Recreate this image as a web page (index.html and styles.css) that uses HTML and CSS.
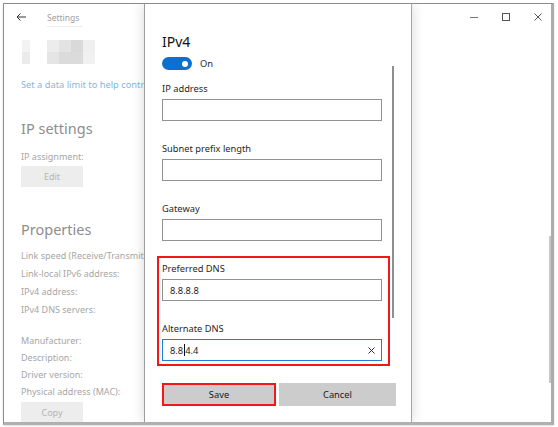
FILE: index.html
```html
<!DOCTYPE html>
<html lang="en">
<head>
<meta charset="utf-8">
<title>Settings - IPv4</title>
<link rel="stylesheet" href="styles.css">
</head>
<body>
<div class="window">
  <div class="titlebar">
    <span class="back"><svg width="10" height="8" viewBox="0 0 10 8"><path d="M4.5 0.5 L1 4 L4.5 7.5 M1 4 H10" fill="none" stroke="#333" stroke-width="1"/></svg></span>
    <span class="apptitle">Settings</span>
    <div class="caption">
      <span class="cap-btn"><svg width="8" height="8" viewBox="0 0 8 8"><path d="M0 4.5 H8" stroke="#777" stroke-width="1"/></svg></span>
      <span class="cap-btn"><svg width="8" height="8" viewBox="0 0 8 8"><rect x="0.5" y="0.5" width="7" height="7" fill="none" stroke="#555" stroke-width="1"/></svg></span>
      <span class="cap-btn"><svg width="8" height="8" viewBox="0 0 8 8"><path d="M0.5 0.5 L7.5 7.5 M7.5 0.5 L0.5 7.5" stroke="#555" stroke-width="1"/></svg></span>
    </div>
  </div>

  <div class="page">
    <div class="mosaic">
      <div class="mcol a"><i class="c1"></i><i class="c2"></i></div>
      <div class="mblock">
        <div class="mcol"><i class="c3"></i><i class="c4"></i></div>
        <div class="mcol"><i class="c5"></i><i class="c6"></i></div>
        <div class="mcol"><i class="c7"></i><i class="c6"></i></div>
        <div class="mcol"><i class="c8"></i><i class="c9"></i></div>
      </div>
    </div>
    <div class="link">Set a data limit to help control</div>
    <div class="heading first">IP settings</div>
    <div class="prop single">IP assignment:</div>
    <div class="fbtn edit">Edit</div>
    <div class="heading second">Properties</div>
    <div class="props one">
      <div>Link speed (Receive/Transmit):</div>
      <div>Link-local IPv6 address:</div>
      <div>IPv4 address:</div>
      <div>IPv4 DNS servers:</div>
    </div>
    <div class="props two">
      <div>Manufacturer:</div>
      <div>Description:</div>
      <div>Driver version:</div>
      <div>Physical address (MAC):</div>
    </div>
    <div class="fbtn copy">Copy</div>
  </div>

  <div class="main-scroll"></div>

  <div class="dialog">
    <div class="dtitle">IPv4</div>
    <div class="toggle-row">
      <span class="toggle"><span class="knob"></span></span>
      <span class="toggle-label">On</span>
    </div>
    <div class="fields">
      <div class="field">
        <div class="flabel">IP address</div>
        <div class="input"></div>
      </div>
      <div class="field">
        <div class="flabel">Subnet prefix length</div>
        <div class="input"></div>
      </div>
      <div class="field">
        <div class="flabel">Gateway</div>
        <div class="input"></div>
      </div>
      <div class="highlight">
        <div class="field">
          <div class="flabel">Preferred DNS</div>
          <div class="input"><span class="val">8.8.8.8</span></div>
        </div>
        <div class="field">
          <div class="flabel">Alternate DNS</div>
          <div class="input focus"><span class="val">8.8<span class="caret"></span>4.4</span>
            <span class="clear"><svg width="7" height="7" viewBox="0 0 7 7"><path d="M0.5 0.5 L6.5 6.5 M6.5 0.5 L0.5 6.5" stroke="#333" stroke-width="1"/></svg></span>
          </div>
        </div>
      </div>
    </div>
    <div class="buttons">
      <div class="dbtn save">Save</div>
      <div class="dbtn cancel">Cancel</div>
    </div>
    <div class="dscroll"></div>
  </div>
</div>
</body>
</html>
```
FILE: styles.css
```css
* { box-sizing: border-box; }
html, body { margin: 0; padding: 0; }
body {
  width: 558px;
  height: 427px;
  overflow: hidden;
  background: #ffffff;
  font-family: "Noto Sans", "Open Sans", "DejaVu Sans", sans-serif;
}
.window {
  position: relative;
  margin: 3px 0 0 3px;
  width: 551px;
  height: 422px;
  background: #ffffff;
  border-top: 1px solid #8c8c8c;
  border-left: 1px solid #8c8c8c;
  border-right: 3px solid #ababab;
  border-bottom: 3px solid #b0b0b0;
  overflow: hidden;
  box-shadow: 0 1px 2px rgba(0,0,0,0.12);
}

/* title bar */
.titlebar {
  height: 26px;
  display: flex;
  align-items: center;
}
.back { margin-left: 12px; width: 10px; height: 8px; display: flex; }
.apptitle {
  margin-left: 21px;
  width: 36px;
  font-size: 8.5px;
  line-height: 12px;
  color: #a0a0a0;
  padding-top: 1px;
  border-bottom: 1px solid #ececec;
  position: relative;
  top: 2px;
  padding-bottom: 2px;
}
.caption { margin-left: auto; margin-right: -3px; display: flex; }
.cap-btn {
  width: 32px;
  height: 26px;
  display: flex;
  align-items: center;
  justify-content: center;
}

/* faded settings page */
.page {
  width: 140px;
  overflow: hidden;
  padding-left: 17px;
  color: #a6a6a6;
  font-size: 9px;
}
.mosaic { margin-top: 10px; margin-left: 1px; display: flex; }
.mcol { display: flex; flex-direction: column; width: 12px; }
.mcol.a { width: 8px; margin-right: 17px; }
.mcol i { display: block; height: 12px; }
.mblock { display: flex; }
.c1 { background: #f3f3f3; }
.c2 { background: #ebebeb; }
.c3 { background: #ececec; }
.c4 { background: #e5e5e5; }
.c5 { background: #e3e3e3; }
.c6 { background: #dbdbdb; }
.c7 { background: #d9d9d9; }
.c8 { background: #efefef; }
.c9 { background: #f1f1f1; }
.link {
  margin-top: 14px;
  line-height: 13px;
  font-size: 9.3px;
  color: #86b6df;
  white-space: nowrap;
  overflow: hidden;
}
.heading {
  font-size: 14.5px;
  line-height: 18px;
  color: #8e8e8e;
}
.heading.first { margin-top: 28px; }
.heading.second { margin-top: 33px; }
.prop.single { margin-top: 13px; line-height: 13px; }
.fbtn {
  width: 62px;
  height: 21px;
  background: #ededed;
  color: #b4b4b4;
  text-align: center;
  line-height: 21px;
}
.fbtn.edit { margin-top: 3px; }
.fbtn.copy { margin-top: 2px; }
.props { white-space: nowrap; overflow: hidden; }
.props.one { margin-top: 9px; line-height: 18px; }
.props.two { margin-top: 13px; line-height: 17px; }

.main-scroll {
  position: absolute;
  right: 0;
  top: 232px;
  width: 2px;
  height: 147px;
  background: #c6c6c6;
}

/* dialog */
.dialog {
  position: absolute;
  left: 140px;
  top: 0;
  bottom: 0;
  width: 268px;
  background: #ffffff;
  border-left: 1px solid #9c9c9c;
  border-right: 1px solid #a8a8a8;
  box-shadow: 0 0 12px rgba(0,0,0,0.16);
  padding: 29px 15px 0 17px;
  color: #1f1f1f;
  font-size: 9.3px;
}
.dtitle { font-size: 14px; line-height: 18px; color: #111; }
.toggle-row {
  margin-top: 6px;
  height: 13px;
  display: flex;
  align-items: center;
}
.toggle {
  width: 30px;
  height: 13px;
  border-radius: 7px;
  background: #0f6fcf;
  display: flex;
  align-items: center;
  justify-content: flex-end;
  padding-right: 4px;
}
.knob { width: 6px; height: 6px; border-radius: 50%; background: #ffffff; }
.toggle-label { margin-left: 8px; line-height: 13px; }
.fields { width: 220px; margin-top: 12px; }
.field + .field { margin-top: 21px; }
.flabel { line-height: 13px; }
.input {
  margin-top: 4px;
  height: 22px;
  border: 1px solid #929292;
  background: #ffffff;
  display: flex;
  align-items: center;
  padding-left: 7px;
  padding-right: 6px;
}
.input.focus { border-color: #1e7fd8; }
.val { display: flex; align-items: center; line-height: 13px; color: #222; }
.caret { display: inline-block; width: 1px; height: 12px; background: #111; margin: 0 0.5px; }
.clear { margin-left: auto; display: flex; }
.highlight {
  margin: 15px -8px 0 -5px;
  border: 2px solid #f21818;
  padding: 4px 6px 3px 3px;
}
.buttons { margin-top: 17px; display: flex; gap: 3px; }
.dbtn {
  height: 23px;
  background: #cccccc;
  color: #1a1a1a;
  text-align: center;
  line-height: 19px;
}
.dbtn.save { width: 114px; border: 2px solid #f21818; }
.dbtn.cancel { width: 117px; line-height: 23px; }
.dscroll {
  position: absolute;
  left: 247px;
  top: 62px;
  width: 2px;
  height: 252px;
  background: #8f8f8f;
}
```
